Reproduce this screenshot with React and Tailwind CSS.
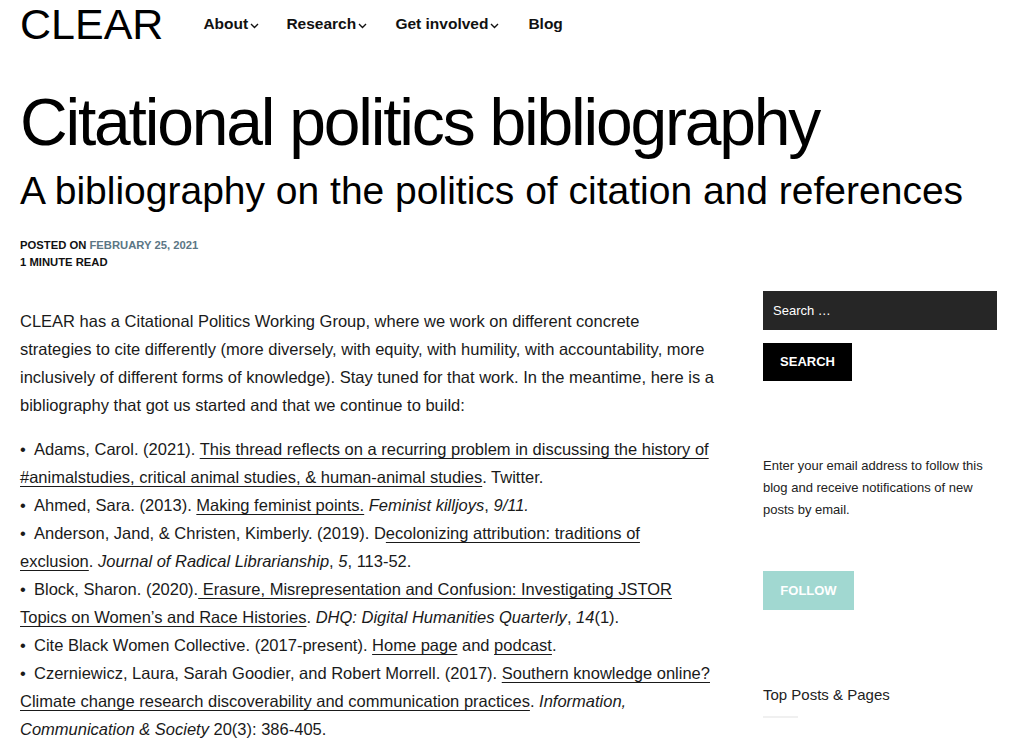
import React from "react";

const Chev = () => (
  <svg width="9" height="6" viewBox="0 0 9 6" className="ml-[2px] mt-[3px]" fill="none">
    <path d="M1 1l3.5 3.5L8 1" stroke="#111" strokeWidth="1.4" />
  </svg>
);

const A = ({ children }) => <a className="underline underline-offset-[3px] decoration-1" href="#">{children}</a>;

const Li = ({ children }) => (
  <li><span className="inline-block w-[14px]">•</span>{children}</li>
);

export default function App() {
  return (
    <div className="bg-white text-[#1a1a1a] min-h-[743px] overflow-hidden" style={{ fontFamily: '"Liberation Sans", Arial, sans-serif' }}>
      <header className="flex items-center h-[50px] px-[20px]">
        <div className="text-[43px] leading-none text-black mr-[40px] mt-[-2px]">CLEAR</div>
        <nav className="flex items-center text-[15.5px] font-bold text-[#111] mt-[-2px]">
          <span className="flex items-center w-[83px]">About<Chev /></span>
          <span className="flex items-center w-[109px]">Research<Chev /></span>
          <span className="flex items-center w-[133px]">Get involved<Chev /></span>
          <span>Blog</span>
        </nav>
      </header>
      <div className="px-[20px] mt-[39px]">
        <h1 className="text-[66px] leading-none tracking-[-2.2px] text-black">Citational politics bibliography</h1>
        <h2 className="text-[39px] leading-none text-black mt-[16px]">A bibliography on the politics of citation and references</h2>
        <div className="mt-[27px] text-[11.25px] font-bold leading-[17px] text-[#111]">
          <div>POSTED ON <span className="text-[#5b7685]">FEBRUARY 25, 2021</span></div>
          <div>1 MINUTE READ</div>
        </div>
      </div>
      <div className="flex px-[20px] mt-[21px]">
        <main className="w-[695px] shrink-0 text-[16.5px] leading-[28px] text-[#1a1a1a]">
          <p className="mt-[15px]">CLEAR has a Citational Politics Working Group, where we work on different concrete strategies to cite differently (more diversely, with equity, with humility, with accountability, more inclusively of different forms of knowledge). Stay tuned for that work. In the meantime, here is a bibliography that got us started and that we continue to build:</p>
          <ul className="mt-[16px]">
            <Li>Adams, Carol. (2021). <A>This thread reflects on a recurring problem in discussing the history of #animalstudies, critical animal studies, &amp; human-animal studies</A>. Twitter.</Li>
            <Li>Ahmed, Sara. (2013). <A>Making feminist points.</A> <i>Feminist killjoys</i>, <i>9/11.</i></Li>
            <Li>Anderson, Jand, &amp; Christen, Kimberly. (2019). D<A>ecolonizing attribution: traditions of exclusion</A>. <i>Journal of Radical Librarianship</i>, <i>5</i>, 113-52.</Li>
            <Li>Block, Sharon. (2020).<A> Erasure, Misrepresentation and Confusion: Investigating JSTOR Topics on Women’s and Race Histories</A>. <i>DHQ: Digital Humanities Quarterly</i>, <i>14</i>(1).</Li>
            <Li>Cite Black Women Collective. (2017-present). <A>Home page</A> and <A>podcast</A>.</Li>
            <Li>Czerniewicz, Laura, Sarah Goodier, and Robert Morrell. (2017). <A>Southern knowledge online? Climate change research discoverability and communication practices</A>. <i>Information, Communication &amp; Society</i> 20(3): 386-405.</Li>
          </ul>
        </main>
        <aside className="ml-[48px] w-[234px] shrink-0 mt-[-1px]">
          <div className="h-[39px] bg-[#262626] text-white text-[13px] flex items-center px-[10px]">Search …</div>
          <div className="mt-[13px] w-[89px] h-[38px] bg-black text-white text-[13px] font-bold flex items-center justify-center">SEARCH</div>
          <p className="mt-[74px] text-[13px] leading-[22px] text-[#222]">Enter your email address to follow this blog and receive notifications of new posts by email.</p>
          <div className="mt-[50px] w-[91px] h-[39px] bg-[#a1d8d1] text-white text-[13px] font-bold flex items-center justify-center">FOLLOW</div>
          <h3 className="mt-[75px] text-[15px] text-[#222] leading-[20px]">Top Posts &amp; Pages</h3>
          <div className="mt-[11px] w-[35px] h-[2px] bg-[#f0f0f0]"></div>
        </aside>
      </div>
    </div>
  );
}
